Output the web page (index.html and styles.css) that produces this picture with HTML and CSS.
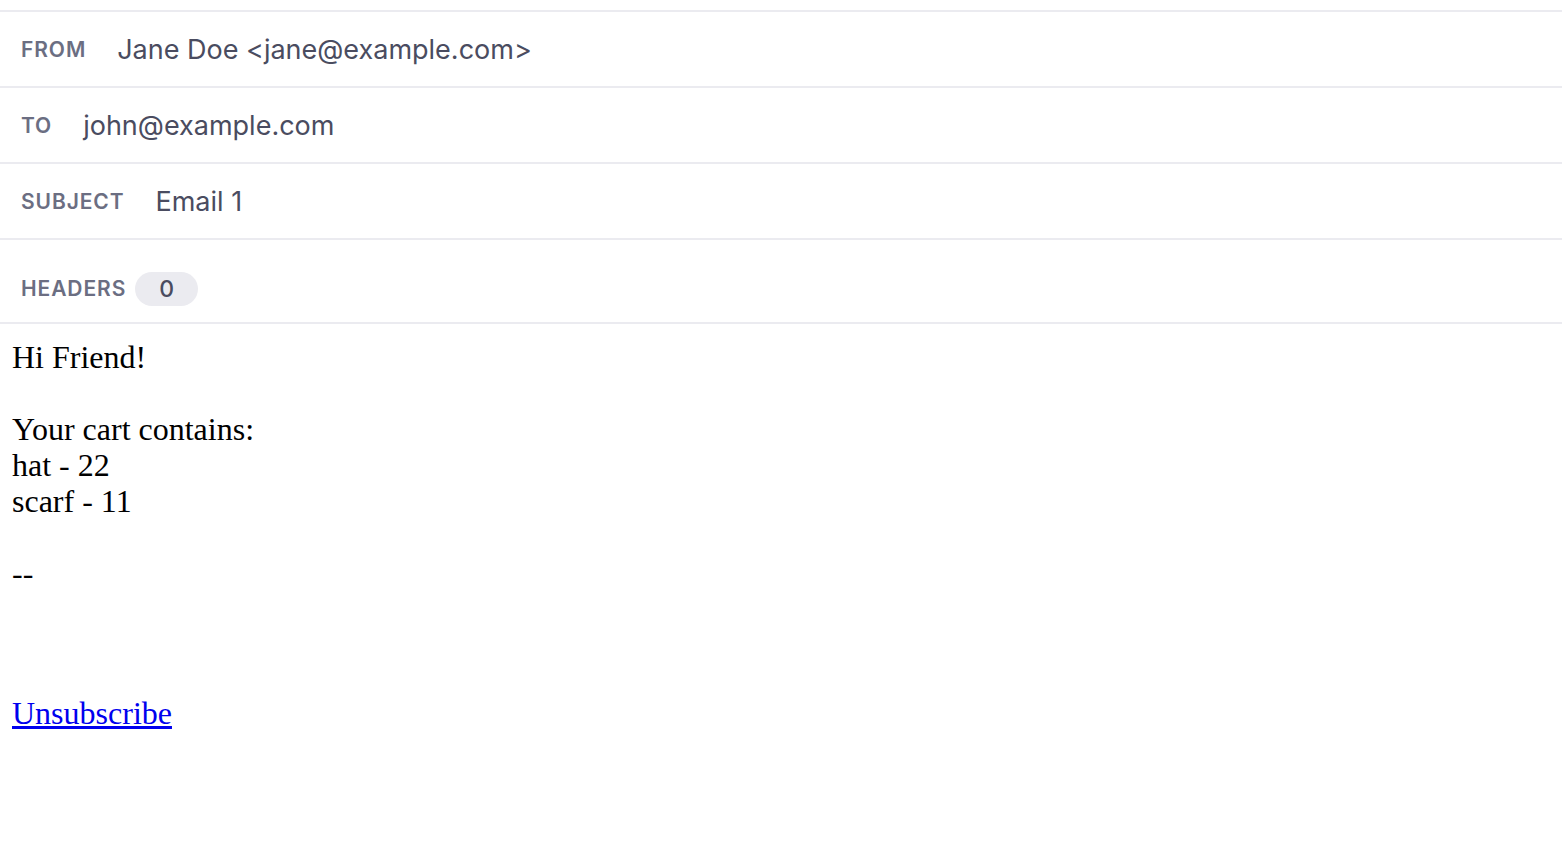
FILE: index.html
```html
<!DOCTYPE html>
<html lang="en">

<head>
    <meta charset="UTF-8">
    <meta name="viewport" content="width=device-width, initial-scale=1.0">
    <title>Email 1</title>
    <link rel="stylesheet" href="styles.css">
</head>

<body>
    <div class="email-preview">
        <div class="meta-row">
            <span class="meta-label">From</span>
            <span class="meta-value">Jane Doe &lt;jane@example.com&gt;</span>
        </div>
        <div class="meta-row">
            <span class="meta-label">To</span>
            <span class="meta-value">john@example.com</span>
        </div>
        <div class="meta-row">
            <span class="meta-label">Subject</span>
            <span class="meta-value">Email 1</span>
        </div>
        <div class="meta-row headers-row">
            <span class="meta-label">Headers</span>
            <span class="badge">0</span>
        </div>

        <div class="email-body">
            <div>Hi Friend!</div>
            <br>
            <div>Your cart contains:</div>
            <div>hat - 22</div>
            <div>scarf - 11</div>
            <br>
            <div>--</div>
            <p class="footer"><a href="#">Unsubscribe</a></p>
        </div>
    </div>
</body>

</html>
```

FILE: styles.css
```css
body {
    margin: 0;
    background-color: #fff;
}

.email-preview {
    padding-top: 10px;
}

.meta-row {
    display: flex;
    align-items: center;
    gap: 31px;
    height: 74px;
    padding: 0 21px;
    border-top: 2px solid #ebebf0;
    font-family: Inter, "Liberation Sans", sans-serif;
}

.headers-row {
    box-sizing: border-box;
    height: 86px;
    padding-top: 15px;
    gap: 9px;
    border-bottom: 2px solid #ebebf0;
}

.meta-label {
    font-size: 21px;
    font-weight: 600;
    letter-spacing: 0.9px;
    text-transform: uppercase;
    color: #6b6e82;
}

.meta-value {
    font-size: 27px;
    color: #4a4c60;
}

.badge {
    display: inline-flex;
    align-items: center;
    justify-content: center;
    width: 63px;
    height: 34px;
    border-radius: 17px;
    background-color: #ebebf0;
    color: #4a4c60;
    font-size: 23px;
    font-weight: 500;
}

.email-body {
    padding: 15px 12px;
    font-family: "Liberation Serif", serif;
    font-size: 32px;
    line-height: 36px;
    color: #000;
}

.email-body .footer {
    margin: 104px 0 0;
}

.email-body a {
    color: #0000ee;
}
```
